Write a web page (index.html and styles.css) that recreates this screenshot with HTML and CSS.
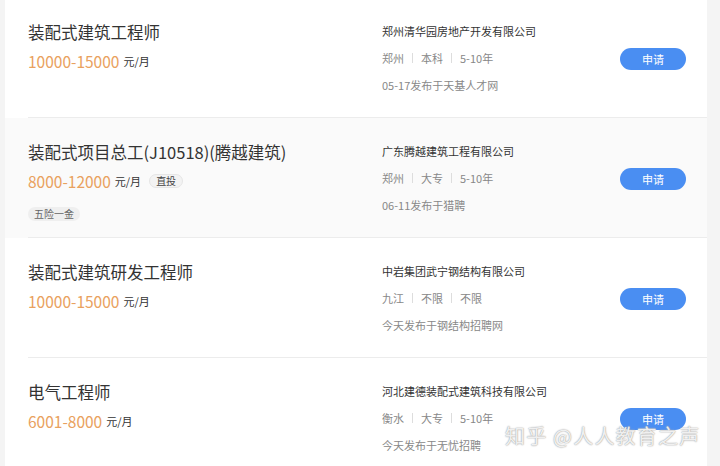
FILE: index.html
```html
<!DOCTYPE html>
<html lang="zh-CN">
<head>
  <meta charset="UTF-8">
  <title>职位列表</title>
  <link rel="stylesheet" href="styles.css">
</head>
<body>
<div class="page">
  <ul class="jobs">
    <li class="job">
      <div class="job-inner">
        <div class="left">
          <div class="title">装配式建筑工程师</div>
          <div class="salary">10000-15000 <span class="unit">元/月</span></div>
        </div>
        <div class="right">
          <div class="company">郑州清华园房地产开发有限公司</div>
          <div class="meta">郑州<i></i>本科<i></i>5-10年</div>
          <div class="date">05-17发布于天基人才网</div>
        </div>
        <div class="action"><span class="apply">申请</span></div>
      </div>
    </li>
    <li class="job alt">
      <div class="job-inner">
        <div class="left">
          <div class="title">装配式项目总工(J10518)(腾越建筑)</div>
          <div class="salary">8000-12000 <span class="unit">元/月</span><span class="tag tag-direct">直投</span></div>
          <div class="perks"><span class="tag">五险一金</span></div>
        </div>
        <div class="right">
          <div class="company">广东腾越建筑工程有限公司</div>
          <div class="meta">郑州<i></i>大专<i></i>5-10年</div>
          <div class="date">06-11发布于猎聘</div>
        </div>
        <div class="action"><span class="apply">申请</span></div>
      </div>
    </li>
    <li class="job">
      <div class="job-inner">
        <div class="left">
          <div class="title">装配式建筑研发工程师</div>
          <div class="salary">10000-15000 <span class="unit">元/月</span></div>
        </div>
        <div class="right">
          <div class="company">中岩集团武宁钢结构有限公司</div>
          <div class="meta">九江<i></i>不限<i></i>不限</div>
          <div class="date">今天发布于钢结构招聘网</div>
        </div>
        <div class="action"><span class="apply">申请</span></div>
      </div>
    </li>
    <li class="job">
      <div class="job-inner">
        <div class="left">
          <div class="title">电气工程师</div>
          <div class="salary">6001-8000 <span class="unit">元/月</span></div>
        </div>
        <div class="right">
          <div class="company">河北建德装配式建筑科技有限公司</div>
          <div class="meta">衡水<i></i>大专<i></i>5-10年</div>
          <div class="date">今天发布于无忧招聘</div>
        </div>
        <div class="action"><span class="apply">申请</span></div>
      </div>
    </li>
  </ul>
  <div class="watermark">知乎 @人人教育之声</div>
</div>
</body>
</html>
```
FILE: styles.css
```css
body {
  margin: 0;
  font-family: "Noto Sans CJK SC", "Noto Sans", sans-serif;
  color: #333;
  background: #f4f4f4;
}
.page {
  position: relative;
  height: 466px;
  overflow: hidden;
  padding: 0 13px 0 5px;
}
.jobs {
  list-style: none;
  margin: -2px 0 0;
  padding: 0;
  background: #fff;
}
.job {
  background: #fff;
  padding-left: 23px;
}
.job.alt {
  background: #fafafa;
}
.job-inner {
  display: flex;
  height: 119px;
  border-bottom: 1px solid #ececec;
}
.left {
  width: 354px;
  padding-top: 22px;
}
.title {
  font-size: 16.5px;
  line-height: 24px;
  color: #333;
}
.salary {
  margin-top: 7px;
  font-size: 15.5px;
  line-height: 20px;
  color: #e9a15e;
  display: flex;
  align-items: center;
}
.unit {
  font-size: 11px;
  color: #333;
  margin-left: 4px;
}
.tag {
  display: inline-block;
  font-size: 10px;
  line-height: 14px;
  padding: 0 6px;
  border-radius: 7px;
  background: #efefef;
  color: #666;
}
.tag-direct {
  margin-left: 8px;
  background: #f3f3f3;
  border: 1px solid #e6e6e6;
  line-height: 12px;
  color: #444;
}
.perks {
  margin-top: 8px;
}
.right {
  width: 220px;
  padding-top: 25px;
  font-size: 11px;
}
.company {
  line-height: 16px;
  color: #333;
}
.meta {
  margin-top: 11px;
  line-height: 16px;
  color: #888;
  display: flex;
  align-items: center;
}
.meta i {
  display: inline-block;
  width: 1px;
  height: 10px;
  background: #ddd;
  margin: 0 8px;
}
.date {
  margin-top: 11px;
  line-height: 16px;
  color: #888;
}
.action {
  padding-top: 47px;
  padding-left: 18px;
}
.apply {
  display: inline-block;
  width: 66px;
  height: 22px;
  line-height: 22px;
  text-align: center;
  border-radius: 11px;
  background: #4a8ef2;
  color: #fff;
  font-size: 11px;
}
.watermark {
  position: absolute;
  left: 505px;
  top: 422px;
  font-size: 20px;
  line-height: 28px;
  color: rgba(255, 255, 255, 0.85);
  text-shadow: 0 0 1px #999, 0 0 2px #bbb;
  letter-spacing: 1.2px;
}
```
